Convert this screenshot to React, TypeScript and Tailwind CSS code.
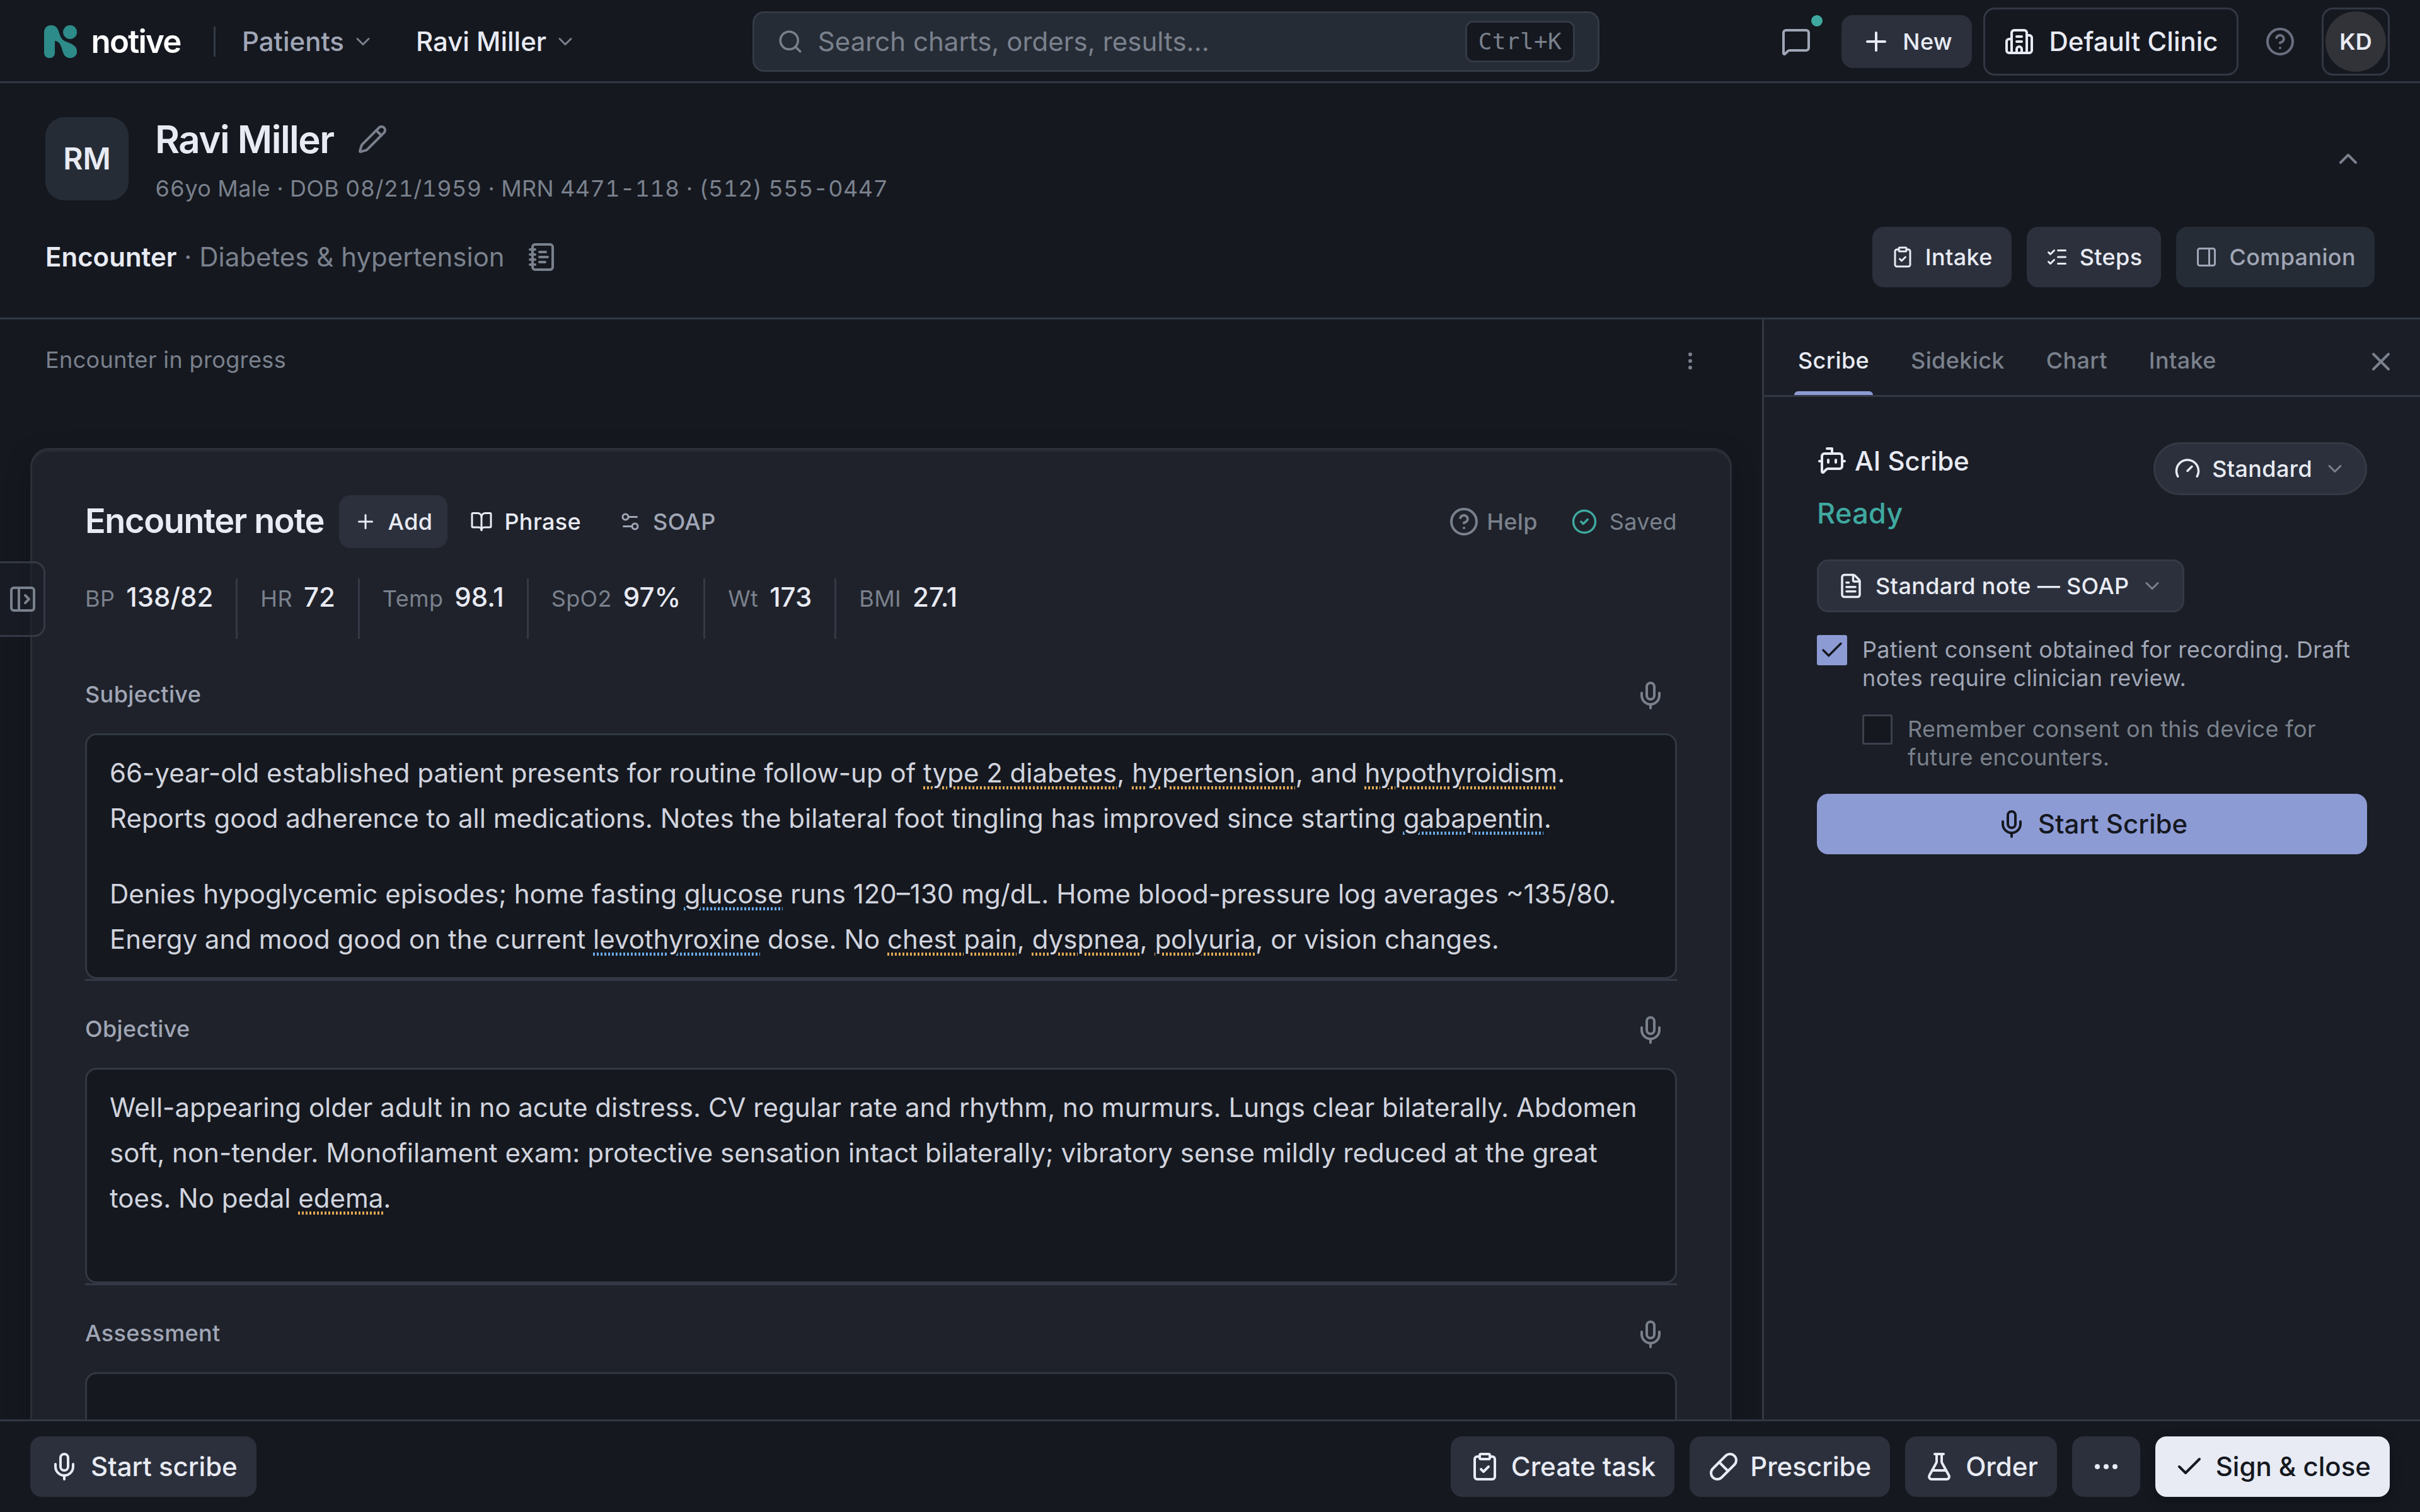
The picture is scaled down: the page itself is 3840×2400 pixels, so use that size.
import React from "react";
import {
  BookOpen,
  BotMessageSquare,
  Building2,
  Check,
  ChevronDown,
  ChevronUp,
  CircleCheck,
  CircleHelp,
  ClipboardCheck,
  Ellipsis,
  EllipsisVertical,
  FileText,
  FlaskConical,
  Gauge,
  ListChecks,
  MessageSquare,
  Mic,
  NotebookText,
  PanelLeftOpen,
  PanelRight,
  Pencil,
  Pill,
  Plus,
  Search,
  Settings2,
  X,
} from "lucide-react";

const VITALS = [
  { label: "BP", value: "138/82" },
  { label: "HR", value: "72" },
  { label: "Temp", value: "98.1" },
  { label: "SpO2", value: "97%" },
  { label: "Wt", value: "173" },
  { label: "BMI", value: "27.1" },
];

const TABS = ["Scribe", "Sidekick", "Chart", "Intake"];

function Logo() {
  return (
    <svg viewBox="30 57 156 156" className="w-[17.4px] h-[17.4px] shrink-0" fill="#2d8b89">
      <path d="M30 91C30 70 44 57 63 57c19 0 31 11 37 32 7 24 14 38 34 46 27 10 52 21 52 47 0 18-14 31-33 31-18 0-29-12-35-32-7-24-13-47-37-50v57c0 16-11 25-25 25-15 0-26-10-26-25Z" />
      <circle cx="153" cy="90" r="33" />
    </svg>
  );
}

// Highlighted clinical terms: amber for problems, blue for medications and labs.
// Two stacked dotted lines keep the dots narrow but a little taller.
function Problem({ children }: { children: React.ReactNode }) {
  return (
    <span className="underline decoration-dotted decoration-1 underline-offset-2 decoration-[#e0a955]">
      <span className="underline decoration-dotted decoration-1 underline-offset-[2.67px] decoration-[#e0a955]">
        {children}
      </span>
    </span>
  );
}

function Med({ children }: { children: React.ReactNode }) {
  return (
    <span className="underline decoration-dotted decoration-1 underline-offset-2 decoration-[#6aaae8]">
      <span className="underline decoration-dotted decoration-1 underline-offset-[2.67px] decoration-[#6aaae8]">
        {children}
      </span>
    </span>
  );
}

function NoteSection({ title, first, children }: { title: string; first?: boolean; children?: React.ReactNode }) {
  return (
    <div className="border-b border-[#343945]">
      <div className={`flex items-center justify-between h-6 mb-2 pr-1.5 ${first ? "mt-[18px]" : "mt-3.5"}`}>
        <span className="pb-px text-xs leading-[15px] font-medium tracking-[0.01em] text-[#a0a6b6]">{title}</span>
        <Mic className="w-4 h-4 text-[#7a818d]" />
      </div>
      <div className="min-h-[114px] px-3 py-2 bg-[#15181f] border border-[#323843] rounded-md text-sm leading-6 text-[#d1d4de] space-y-4">
        {children}
      </div>
    </div>
  );
}

function TopBar() {
  return (
    <header className="flex items-center h-11 shrink-0 pr-4 shadow-[inset_0_-1px_0_#323843]">
      <div className="flex items-center w-[398px] pl-[23.3px]">
        <div className="flex items-center w-[89.7px]">
          <Logo />
          <span className="ml-[7.5px] text-[17px] font-semibold tracking-[-0.035em] text-white">notive</span>
        </div>
        <div className="w-px h-4 bg-[#343945]" />
        <span className="ml-3.5 text-sm font-medium text-[#a0a6b6]">Patients</span>
        <ChevronDown className="w-3 h-3 ml-1 text-[#7a818d]" />
        <span className="ml-[22px] text-sm font-medium text-[#e8ebf4]">Ravi Miller</span>
        <ChevronDown className="w-3 h-3 ml-1 text-[#7a818d]" />
      </div>

      <div className="flex items-center w-[448px] h-8 px-3 bg-[#262c35] border border-[#343945] rounded-md">
        <Search className="w-3.5 h-3.5 text-[#7a818d]" />
        <span className="ml-[7.6px] flex-1 text-sm text-[#7a818d]">Search charts, orders, results...</span>
        <kbd className="flex items-center h-[22px] px-1.5 bg-[#15181f] border border-[#343945] rounded text-xs tracking-[0.01em] text-[#7a818d] font-['DejaVu_Sans_Mono',monospace]">
          Ctrl+K
        </kbd>
      </div>

      <div className="flex items-center ml-auto">
        <div className="relative mr-4">
          <MessageSquare className="w-4 h-4 text-[#a0a6b6]" />
          <span className="absolute left-4 -top-1.5 w-1.5 h-1.5 rounded-full bg-[#3fa9a0]" />
        </div>
        <button className="flex items-center justify-center w-[69px] h-7 gap-1.5 bg-[#2c303c] rounded-md text-xs leading-[15px] font-medium tracking-[0.01em] text-[#e8ebf4]">
          <Plus className="w-4 h-4" />
          New
        </button>
        <button className="flex items-center h-9 ml-1.5 px-[9.8px] gap-2 border border-[#323843] rounded-md text-sm font-medium text-[#e8ebf4]">
          <Building2 className="w-4 h-4" />
          Default Clinic
        </button>
        <CircleHelp className="w-4 h-4 mx-3.5 text-[#6b7080]" />
        <div className="flex items-center justify-center w-9 h-9 border border-[#323843] rounded-md">
          <div className="flex items-center justify-center w-8 h-8 shrink-0 rounded-full bg-[#313339] text-xs font-semibold text-[#e8ebf4]">
            KD
          </div>
        </div>
      </div>
    </header>
  );
}

function PatientHeader() {
  return (
    <section className="h-[125px] shrink-0 pt-[18px] px-6 border-b border-[#323843]">
      <div className="flex items-start h-11">
        <div className="flex items-center justify-center w-11 h-11 rounded-[10px] bg-[#262c35] text-base font-semibold text-[#e8ebf4]">
          RM
        </div>
        <div className="ml-3.5 -mt-[0.4px]">
          <div className="flex items-center h-6">
            <h1 className="text-xl leading-6 font-semibold tracking-tight text-[#e8ebf4]">Ravi Miller</h1>
            <Pencil className="w-4 h-4 ml-[12.4px] text-[#7a818d]" />
          </div>
          <p className="mt-1.5 text-xs tracking-[0.01em] tabular-nums text-[#7a818d]">
            66yo Male · DOB 08/21/1959 · MRN 4471-118 · (512) 555-0447
          </p>
        </div>
        <ChevronUp className="w-4 h-4 ml-auto mt-3.5 mr-1.5 text-[#7a818d]" />
      </div>

      <div className="flex items-center mt-3.5">
        <p className="text-sm text-[#7a818d]">
          <span className="font-semibold text-[#e8ebf4]">Encounter</span> · Diabetes &amp; hypertension
        </p>
        <NotebookText className="w-4 h-4 ml-3 text-[#7a818d]" />
        <div className="flex ml-auto gap-2 text-xs leading-[15px] font-medium tracking-[0.01em] text-[#e8ebf4]">
          <button className="flex items-center h-8 px-2.5 gap-1.5 bg-[#2c303c] rounded-md">
            <ClipboardCheck className="w-3 h-3" />
            Intake
          </button>
          <button className="flex items-center h-8 px-2.5 gap-1.5 bg-[#2c303c] rounded-md">
            <ListChecks className="w-3 h-3" />
            Steps
          </button>
          <button className="flex items-center h-8 px-2.5 gap-1.5 bg-[#262c35] rounded-md text-[#a0a6b6]">
            <PanelRight className="w-3 h-3" />
            Companion
          </button>
        </div>
      </div>
    </section>
  );
}

function EncounterNote() {
  return (
    <div className="mx-4 px-7 pt-6 pb-7 bg-[#1f222a] border border-[#2a2f38] rounded-[10px] shadow-[0_4px_14px_rgba(0,0,0,0.22),inset_0_1px_0_#272b34]">
      <div className="flex items-center h-7 text-xs leading-[15px] font-medium tracking-[0.01em] text-[#e8ebf4]">
        <h2 className="pb-px text-lg font-semibold tracking-tight">Encounter note</h2>
        <button className="flex items-center h-7 ml-[7.8px] px-2 gap-1.5 bg-[#2c303c] rounded-md">
          <Plus className="w-3 h-3" />
          Add
        </button>
        <button className="flex items-center h-7 ml-1 px-2 gap-1.5">
          <BookOpen className="w-3 h-3" />
          Phrase
        </button>
        <button className="flex items-center h-7 ml-1 px-2 gap-1.5 text-[#a0a6b6]">
          <Settings2 className="w-3 h-3" />
          SOAP
        </button>
        <div className="flex items-center ml-auto text-[#7a818d]">
          <CircleHelp className="w-4 h-4 mr-1" />
          Help
          <CircleCheck className="w-3.5 h-3.5 ml-[17.7px] mr-[6.3px] text-[#3fa9a0]" />
          <span className="font-normal">Saved</span>
        </div>
      </div>

      <div className="flex mt-4">
        {VITALS.map((v) => (
          <div
            key={v.label}
            className="flex items-baseline h-8 gap-1.5 pr-3 mr-3 border-r border-[#343945] last:border-r-0"
          >
            <span className="text-xs tracking-[0.01em] text-[#7a818d]">{v.label}</span>
            <span className="text-sm font-medium text-[#e8ebf4]">{v.value}</span>
          </div>
        ))}
      </div>

      <NoteSection title="Subjective" first>
        <p>
          66-year-old established patient presents for routine follow-up of <Problem>type 2 diabetes</Problem>,{" "}
          <Problem>hypertension</Problem>, and <Problem>hypothyroidism</Problem>. Reports good adherence to all
          medications. Notes the bilateral foot tingling has improved since starting <Med>gabapentin</Med>.
        </p>
        <p>
          Denies hypoglycemic episodes; home fasting <Med>glucose</Med> runs 120–130 mg/dL. Home blood-pressure log
          averages ~135/80. Energy and mood good on the current <Med>levothyroxine</Med> dose. No{" "}
          <Problem>chest pain</Problem>, <Problem>dyspnea</Problem>, <Problem>polyuria</Problem>, or vision changes.
        </p>
      </NoteSection>
      <NoteSection title="Objective">
        <p>
          Well-appearing older adult in no acute distress. CV regular rate and rhythm, no murmurs. Lungs clear
          bilaterally. Abdomen soft, non-tender. Monofilament exam: protective sensation intact bilaterally; vibratory
          sense mildly reduced at the great toes. No pedal <Problem>edema</Problem>.
        </p>
      </NoteSection>
      <NoteSection title="Assessment" />
    </div>
  );
}

function ScribePanel() {
  return (
    <aside className="w-[348px] shrink-0 bg-[#1b1e26] border-l border-[#323843]">
      <div className="flex h-[41px] pl-4 pr-[12.8px] border-b border-[#323843]">
        <nav className="flex gap-[18px] text-xs font-medium tracking-[0.01em]">
          {TABS.map((tab, i) => (
            <div
              key={tab}
              className={`relative flex items-center px-0.5 pt-[3px] ${i === 0 ? "text-[#e8ebf4]" : "text-[#7a818d]"}`}
            >
              {tab}
              {i === 0 && <span className="absolute inset-x-0 bottom-0 h-0.5 rounded-t-sm bg-[#8d9bd5]" />}
            </div>
          ))}
        </nav>
        <X className="w-4 h-4 ml-auto mt-[14.3px] text-[#7a818d]" />
      </div>

      <div className="px-7 pt-6 text-xs leading-[15px] tracking-[0.01em]">
        <div className="flex items-start justify-between h-[62px]">
          <div>
            <div className="flex items-center h-5 gap-1 text-sm font-medium tracking-normal text-[#e8ebf4]">
              <BotMessageSquare className="w-4 h-4" />
              AI Scribe
            </div>
            <div className="mt-[6.5px] text-[15px] leading-[22px] font-medium text-[#3fa9a0]">Ready</div>
          </div>
          <button className="flex items-center h-7 px-2.5 gap-1.5 bg-[#2c303c] border border-[#343945] rounded-full font-medium text-[#e8ebf4]">
            <Gauge className="w-3.5 h-3.5" />
            Standard
            <ChevronDown className="w-3 h-3 text-[#7a818d]" />
          </button>
        </div>

        <button className="flex items-center h-7 px-2.5 gap-1.5 bg-[#2c303c] border border-[#343945] rounded-md font-medium text-[#e8ebf4]">
          <FileText className="w-3.5 h-3.5" />
          Standard note — SOAP
          <ChevronDown className="w-3 h-3 text-[#7a818d]" />
        </button>

        <label className="flex items-start gap-2 mt-3 text-[#a0a6b6]">
          <span className="flex items-center justify-center w-4 h-4 shrink-0 bg-[#8d9bd5] rounded-[1px] text-[#15181f]">
            <Check className="w-3.5 h-3.5" />
          </span>
          <span className="pt-[0.4px] -mb-[0.4px]">
            Patient consent obtained for recording. Draft notes require clinician review.
          </span>
        </label>
        <label className="flex items-start gap-2 mt-3 ml-6 text-[#7a818d]">
          <span className="w-4 h-4 shrink-0 bg-[#15181f] border border-[#3b414d] rounded-[1px]" />
          <span className="pt-[0.4px] -mb-[0.4px]">Remember consent on this device for future encounters.</span>
        </label>

        <button className="flex items-center justify-center w-full h-8 mt-3 gap-1.5 bg-[#8d9bd5] rounded-md text-sm font-medium tracking-normal text-[#15181f]">
          <Mic className="w-4 h-4" />
          Start Scribe
        </button>
      </div>
    </aside>
  );
}

function ActionBar() {
  return (
    <footer className="flex items-center h-[49px] shrink-0 px-4 gap-2 border-t border-[#323843] text-sm font-medium text-[#e8ebf4]">
      <button className="flex items-center h-8 px-2.5 gap-1.5 mr-auto bg-[#2c303c] rounded-md">
        <Mic className="w-4 h-4" />
        Start scribe
      </button>
      <button className="flex items-center h-8 px-2.5 gap-1.5 bg-[#2c303c] rounded-md">
        <ClipboardCheck className="w-4 h-4" />
        Create task
      </button>
      <button className="flex items-center h-8 px-2.5 gap-1.5 bg-[#2c303c] rounded-md">
        <Pill className="w-4 h-4" />
        Prescribe
      </button>
      <button className="flex items-center h-8 px-2.5 gap-1.5 bg-[#2c303c] rounded-md">
        <FlaskConical className="w-4 h-4" />
        Order
      </button>
      <button className="flex items-center h-8 px-2.5 bg-[#2c303c] rounded-md">
        <Ellipsis className="w-4 h-4" />
      </button>
      <button className="flex items-center h-8 px-2.5 gap-1.5 bg-[#e8ebf4] rounded-md text-[#15181f] shadow-[0_2px_6px_rgba(0,0,0,0.3)]">
        <Check className="w-4 h-4" />
        Sign &amp; close
      </button>
    </footer>
  );
}

export default function App() {
  return (
    <div className="[zoom:3] flex flex-col w-[1280px] h-[800px] overflow-hidden bg-[#15181f] font-['Inter',sans-serif]">
      <TopBar />
      <PatientHeader />
      <div className="flex flex-1 min-h-0">
        <main className="relative flex-1 min-w-0 overflow-hidden">
          <div className="flex items-center justify-between h-11 mb-6 pl-6 pr-8 text-xs leading-[15px] tracking-[0.01em] text-[#7a818d]">
            <span className="pb-px">Encounter in progress</span>
            <EllipsisVertical className="w-3 h-3" />
          </div>
          <EncounterNote />

          {/* Collapsed side drawer handle */}
          <button className="absolute left-0 top-32 flex items-center justify-center w-6 h-10 pl-px bg-[#1b1e26]/60 border border-l-0 border-[#343945] rounded-r-md">
            <PanelLeftOpen className="w-4 h-4 text-[#7a818d]" />
          </button>
        </main>
        <ScribePanel />
      </div>
      <ActionBar />
    </div>
  );
}
